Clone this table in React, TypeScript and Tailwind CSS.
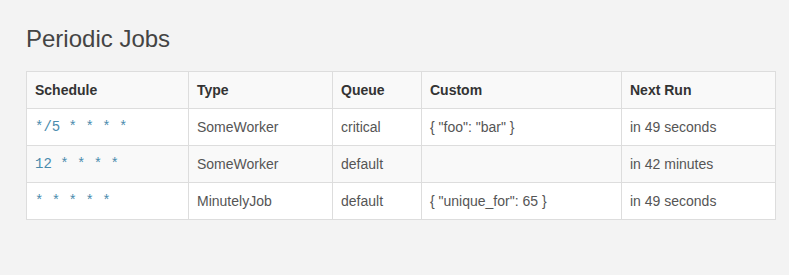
const jobs = [
  { schedule: "*/5 * * * *", type: "SomeWorker", queue: "critical", custom: '{ "foo": "bar" }', next: "in 49 seconds" },
  { schedule: "12 * * * *", type: "SomeWorker", queue: "default", custom: "", next: "in 42 minutes" },
  { schedule: "* * * * *", type: "MinutelyJob", queue: "default", custom: '{ "unique_for": 65 }', next: "in 49 seconds" },
];

const App = () => {
  return (
    <div className="w-[789px] h-[275px] bg-[#f3f3f3] px-[26px] pt-[26px] font-['Liberation_Sans',Arial,sans-serif]">
      <h3 className="text-[24px] leading-[26px] text-[#444] mb-[19px]">Periodic Jobs</h3>
      <table className="w-[749px] border-collapse border border-[#ddd] text-[14px] text-[#555] table-fixed">
        <colgroup>
          <col className="w-[162px]" />
          <col className="w-[144px]" />
          <col className="w-[89px]" />
          <col className="w-[200px]" />
          <col className="w-[154px]" />
        </colgroup>
        <thead>
          <tr className="bg-[#f9f9f9] h-[37px]">
            {["Schedule", "Type", "Queue", "Custom", "Next Run"].map((h) => (
              <th key={h} className="border border-[#ddd] px-2 text-left font-bold text-[#333]">
                {h}
              </th>
            ))}
          </tr>
        </thead>
        <tbody>
          {jobs.map((job, i) => (
            <tr key={i} className={`h-[37px] ${i % 2 === 1 ? "bg-[#f9f9f9]" : "bg-white"}`}>
              <td className="border border-[#ddd] px-2">
                <code className="font-['Liberation_Mono','Courier_New',monospace] text-[14px] text-[#4a8bad] whitespace-pre">
                  {job.schedule}
                </code>
              </td>
              <td className="border border-[#ddd] px-2">{job.type}</td>
              <td className="border border-[#ddd] px-2">{job.queue}</td>
              <td className="border border-[#ddd] px-2">{job.custom}</td>
              <td className="border border-[#ddd] px-2">{job.next}</td>
            </tr>
          ))}
        </tbody>
      </table>
    </div>
  );
};

export default App;
